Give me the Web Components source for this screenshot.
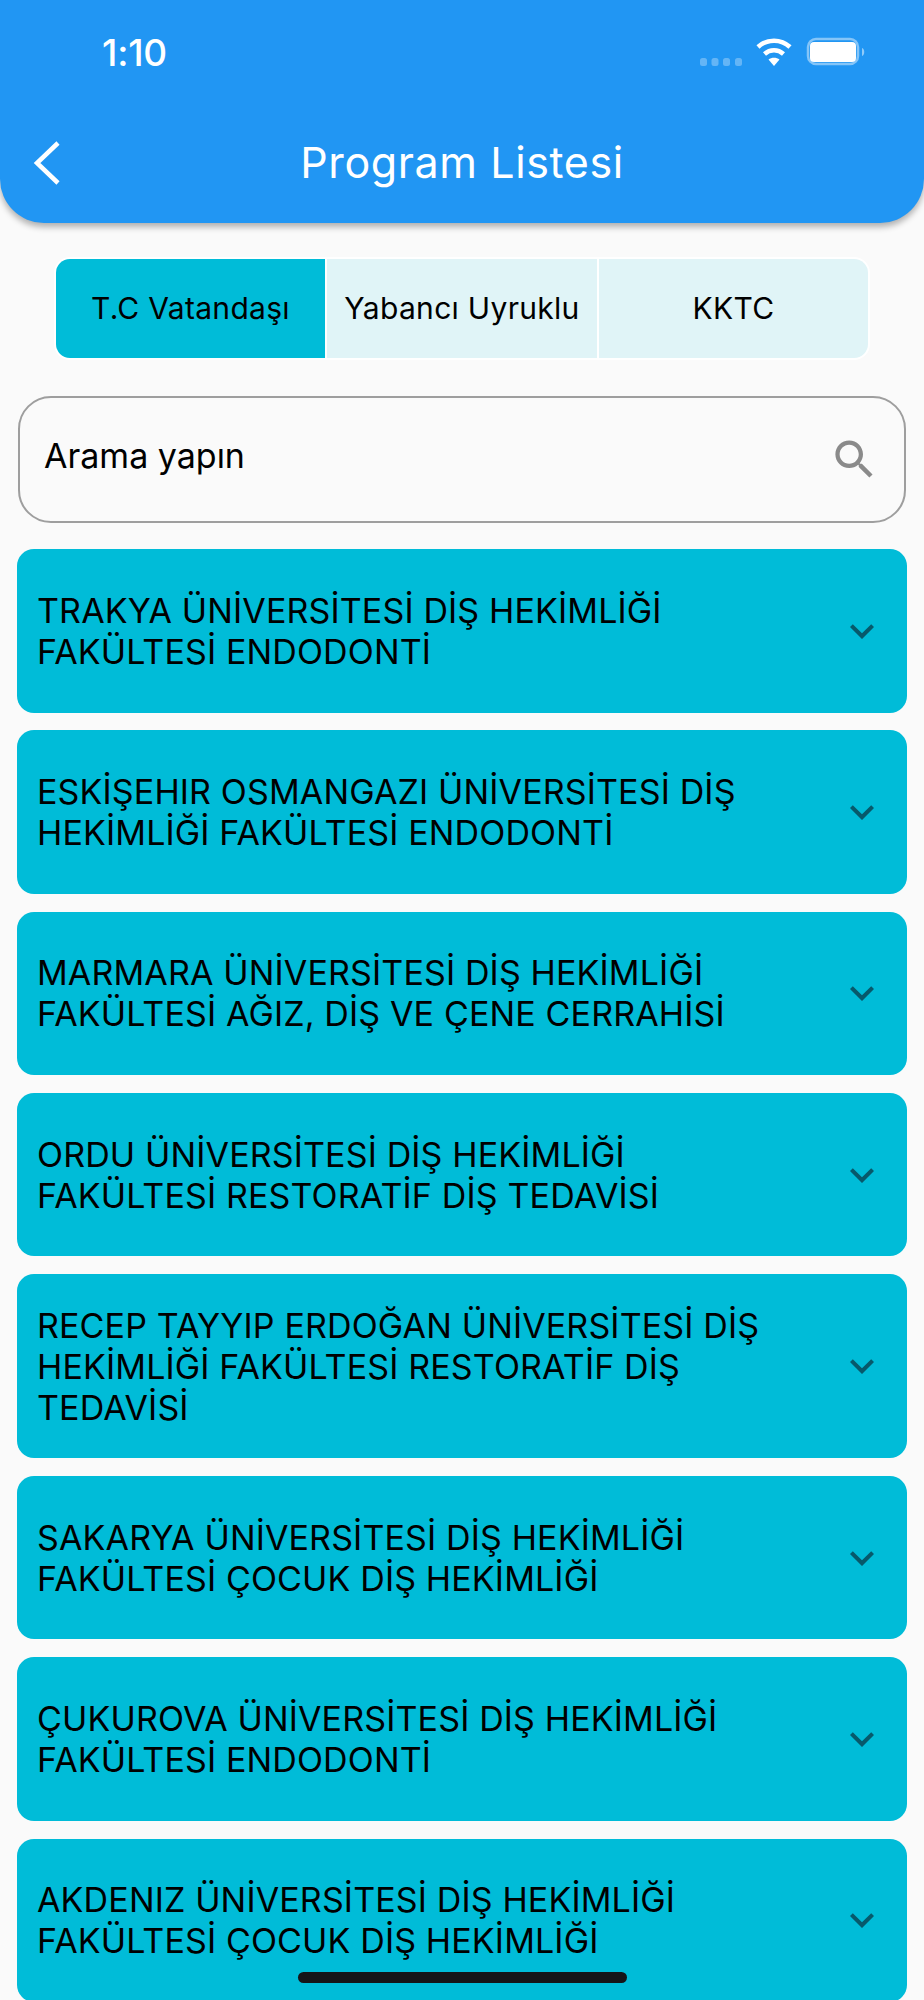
<!DOCTYPE html>
<html lang="tr">
<head>
<meta charset="utf-8">
<title>Program Listesi</title>
<style>
    html, body { margin: 0; height: 2000px; overflow: hidden; background: #fafafa; }
    body { font-family: Inter, "Liberation Sans", sans-serif; color: #000; position: relative; }
    program-list { display: block; padding: 26px 17px 0; }
</style>
</head>
<body>
<app-header title="Program Listesi"></app-header>
<tab-switch></tab-switch>
<search-box placeholder="Arama yapın"></search-box>
<program-list>
    <program-card>TRAKYA ÜNİVERSİTESİ DİŞ HEKİMLİĞİ FAKÜLTESİ ENDODONTİ</program-card>
    <program-card>ESKİŞEHIR OSMANGAZI ÜNİVERSİTESİ DİŞ HEKİMLİĞİ FAKÜLTESİ ENDODONTİ</program-card>
    <program-card>MARMARA ÜNİVERSİTESİ DİŞ HEKİMLİĞİ FAKÜLTESİ AĞIZ, DİŞ VE ÇENE CERRAHİSİ</program-card>
    <program-card>ORDU ÜNİVERSİTESİ DİŞ HEKİMLİĞİ FAKÜLTESİ RESTORATİF DİŞ TEDAVİSİ</program-card>
    <program-card>RECEP TAYYIP ERDOĞAN ÜNİVERSİTESİ DİŞ HEKİMLİĞİ FAKÜLTESİ RESTORATİF DİŞ TEDAVİSİ</program-card>
    <program-card>SAKARYA ÜNİVERSİTESİ DİŞ HEKİMLİĞİ FAKÜLTESİ ÇOCUK DİŞ HEKİMLİĞİ</program-card>
    <program-card>ÇUKUROVA ÜNİVERSİTESİ DİŞ HEKİMLİĞİ FAKÜLTESİ ENDODONTİ</program-card>
    <program-card>AKDENIZ ÜNİVERSİTESİ DİŞ HEKİMLİĞİ FAKÜLTESİ ÇOCUK DİŞ HEKİMLİĞİ</program-card>
</program-list>
<home-bar></home-bar>

<script>
class AppHeader extends HTMLElement {
    connectedCallback() {
        this.attachShadow({ mode: 'open' });
        this.shadowRoot.innerHTML = `
            <style>
                :host {
                    display: block;
                    height: 223px;
                    background: #2196f3;
                    border-radius: 0 0 44px 44px;
                    box-shadow: 0 4px 6px rgba(0,0,0,0.3);
                    color: #fff;
                }
                .status {
                    height: 104px;
                    display: flex;
                    align-items: center;
                    justify-content: space-between;
                    box-sizing: border-box;
                    padding: 0 58px 0 102px;
                }
                .time { font-size: 37px; font-weight: 500; line-height: 44px; letter-spacing: -0.2px; position: relative; top: 1px; }
                .nav {
                    height: 119px;
                    position: relative;
                    display: flex;
                    justify-content: center;
                    box-sizing: border-box;
                    padding-top: 35px;
                }
                .title { font-size: 43px; line-height: 46px; letter-spacing: 0.6px; }
                .back { position: absolute; left: 33px; top: 37px; }
            </style>
            <div class="status">
                <span class="time">1:10</span>
                <svg width="166" height="32" viewBox="0 0 166 32">
                    <g fill="#fff" opacity="0.3">
                        <rect x="0" y="22" width="7" height="8" rx="2.500"/>
                        <rect x="11.500" y="22" width="7" height="8" rx="2.500"/>
                        <rect x="23" y="22" width="7" height="8" rx="2.500"/>
                        <rect x="35" y="22" width="7" height="8" rx="2.500"/>
                    </g>
                    <g fill="none" stroke="#fff" stroke-width="4.500">
                        <path d="M58 11 C67 2.500 81 2.500 90 11"/>
                        <path d="M64.500 18 C70 13 78 13 83.500 18"/>
                    </g>
                    <path d="M68.500 23.500 C71.500 21 76.500 21 79.500 23.500 L74 30 Z" fill="#fff"/>
                    <rect x="108" y="3" width="50" height="25" rx="8" fill="none" stroke="#fff" stroke-opacity="0.45" stroke-width="2.500"/>
                    <rect x="110" y="6" width="46" height="20" rx="4" fill="#fff"/>
                    <path d="M162 12 C165 13 165 19 162 20 Z" fill="#fff" fill-opacity="0.5"/>
                </svg>
            </div>
            <div class="nav">
                <svg class="back" width="30" height="44" viewBox="0 0 30 44">
                    <path d="M25 2 L4 22 L25 42" fill="none" stroke="#fff" stroke-width="4.500"/>
                </svg>
                <span class="title">${this.getAttribute('title')}</span>
            </div>
        `;
    }
}

class TabSwitch extends HTMLElement {
    connectedCallback() {
        this.attachShadow({ mode: 'open' });
        const tabs = ['T.C Vatandaşı', 'Yabancı Uyruklu', 'KKTC'];
        this.shadowRoot.innerHTML = `
            <style>
                :host {
                    display: grid;
                    grid-template-columns: 269px 270px 269px;
                    gap: 2px;
                    margin: 34px 54px 0;
                    height: 99px;
                    border: 2px solid #fff;
                    border-radius: 16px;
                    overflow: hidden;
                    width: max-content;
                    background: #fff;
                }
                div {
                    display: flex;
                    align-items: center;
                    justify-content: center;
                    background: #e0f4f7;
                    font-size: 30px;
                    letter-spacing: 0.3px;
                    padding-bottom: 2px;
                }
                .on { background: #00bcd8; }
            </style>
            ${tabs.map((t, i) => `<div class="${i === 0 ? 'on' : ''}">${t}</div>`).join('')}
        `;
    }
}

class SearchBox extends HTMLElement {
    connectedCallback() {
        this.attachShadow({ mode: 'open' });
        this.shadowRoot.innerHTML = `
            <style>
                :host {
                    display: flex;
                    align-items: center;
                    justify-content: space-between;
                    box-sizing: border-box;
                    margin: 36px 18px 0;
                    height: 127px;
                    padding: 0 24px 0 24px;
                    border: 2px solid #9e9e9e;
                    border-radius: 33px;
                    font-size: 34px;
                }
                span { position: relative; top: -4px; }
            </style>
            <span>${this.getAttribute('placeholder')}</span>
            <svg width="51" height="51" viewBox="0 0 24 24">
                <path fill="#8a8a8a" d="M15.500 14h-.79l-.28-.27C15.410 12.590 16 11.110 16 9.500 16 5.910 13.090 3 9.500 3S3 5.910 3 9.500 5.910 16 9.500 16c1.610 0 3.090-.59 4.230-1.570l.27.28v.79l5 4.990L20.490 19l-4.990-5zm-6 0C7.010 14 5 11.990 5 9.500S7.010 5 9.500 5 14 7.010 14 9.500 11.990 14 9.500 14z"/>
            </svg>
        `;
    }
}

class ProgramCard extends HTMLElement {
    connectedCallback() {
        this.attachShadow({ mode: 'open' });
        this.shadowRoot.innerHTML = `
            <style>
                :host {
                    display: flex;
                    align-items: center;
                    box-sizing: border-box;
                    min-height: 163.500px;
                    margin-bottom: 17.800px;
                    padding: 30.500px 21px 30.500px 20px;
                    background: #00bcd8;
                    border-radius: 17px;
                    font-size: 34px;
                    line-height: 41px;
                    letter-spacing: 0.15px;
                }
                .text { flex: 1; max-width: 760px; }
                svg { margin-left: auto; flex: none; }
            </style>
            <span class="text"><slot></slot></span>
            <svg width="48" height="48" viewBox="0 0 24 24">
                <path fill="#07596b" d="M7.410 8.590 12 13.170l4.590-4.580L18 10l-6 6-6-6z"/>
            </svg>
        `;
    }
}

class HomeBar extends HTMLElement {
    connectedCallback() {
        this.attachShadow({ mode: 'open' });
        this.shadowRoot.innerHTML = `
            <style>
                :host {
                    position: absolute;
                    left: 298px;
                    top: 1972px;
                    width: 329px;
                    height: 11px;
                    border-radius: 6px;
                    background: #151518;
                }
            </style>
        `;
    }
}

customElements.define('app-header', AppHeader);
customElements.define('tab-switch', TabSwitch);
customElements.define('search-box', SearchBox);
customElements.define('program-card', ProgramCard);
customElements.define('home-bar', HomeBar);
</script>
</body>
</html>
